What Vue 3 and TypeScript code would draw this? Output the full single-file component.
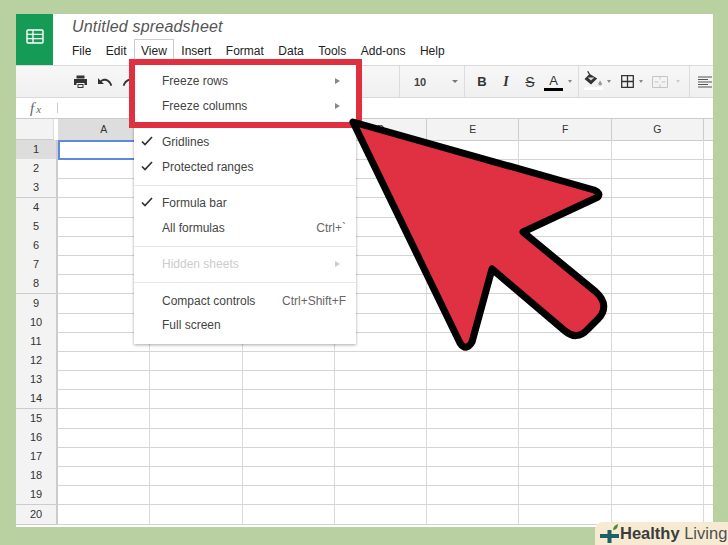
<script setup lang="ts">
const menus = ['File', 'Edit', 'View', 'Insert', 'Format', 'Data', 'Tools', 'Add-ons', 'Help']
const columns = ['A', 'B', 'C', 'D', 'E', 'F', 'G', '']
const rows = Array.from({ length: 20 }, (_, i) => i + 1)

interface Item {
  label?: string
  check?: boolean
  arrow?: boolean
  keys?: string
  disabled?: boolean
  sep?: boolean
}

const items: Item[] = [
  { label: 'Freeze rows', arrow: true },
  { label: 'Freeze columns', arrow: true },
  { sep: true },
  { label: 'Gridlines', check: true },
  { label: 'Protected ranges', check: true },
  { sep: true },
  { label: 'Formula bar', check: true },
  { label: 'All formulas', keys: "Ctrl+`" },
  { sep: true },
  { label: 'Hidden sheets', arrow: true, disabled: true },
  { sep: true },
  { label: 'Compact controls', keys: 'Ctrl+Shift+F' },
  { label: 'Full screen' },
]
</script>

<template>
  <div class="page">
    <div class="sheet">
      <header class="top">
        <div class="logo">
          <svg width="18" height="15" viewBox="0 0 18 15">
            <rect x="1" y="1" width="16" height="13" rx="1" fill="none" stroke="#fff" stroke-width="1.4" />
            <path d="M1 5.3h16M1 9.6h16M7 1v13" stroke="#fff" stroke-width="1.3" />
          </svg>
        </div>
        <div class="titles">
          <div class="doc-title">Untitled spreadsheet</div>
          <nav class="menubar">
            <span v-for="m in menus" :key="m" class="menu-name" :class="{ open: m === 'View' }">{{ m }}</span>
          </nav>
        </div>
      </header>

      <div class="toolbar">
        <div class="tool-group left">
          <svg class="ic" width="15" height="14" viewBox="0 0 15 14">
            <path d="M3.5 0.5h8v3h-8z" fill="#333" />
            <path d="M1 4h13v6h-2.500v-2h-8v2H1z" fill="#333" />
            <path d="M4.500 9h6v4h-6z" fill="#333" />
            <path d="M5.500 10h4v2h-4z" fill="#eee" />
          </svg>
          <svg class="ic" width="16" height="10" viewBox="0 0 16 10">
            <path d="M1 1v6h6L4.600 4.800C7.500 2.800 11.500 3.600 13.600 9l1.600-.6C13 1.500 7.500.2 3.300 3.400z" fill="#333" />
          </svg>
          <svg class="ic" width="16" height="10" viewBox="0 0 16 10">
            <path d="M15 1v6H9l2.400-2.200C8.500 2.800 4.500 3.600 2.400 9L.8 8.400C3 1.500 8.500.2 12.700 3.400z" fill="#333" />
          </svg>
        </div>
        <div class="tool-group font-size">
          <span class="size">10</span>
          <i class="caret" />
        </div>
        <div class="tool-group format">
          <span class="fmt bold">B</span>
          <span class="fmt italic">I</span>
          <span class="fmt strike">S</span>
          <span class="fmt color">A</span>
          <i class="caret small" />
        </div>
        <div class="tool-group fills">
          <svg class="ic bucket" width="20" height="19" viewBox="0 0 20 19">
            <path d="M3 .5l1.200-.5 2 3.200 7 4.300-6.200 6-6.500-5.500L5 3.400z" fill="#333" />
            <path d="M3.800 6.500h6.500l-3.300 3z" fill="#ddd" />
            <path d="M16 9.500c1.500 2 2 2.600 2 3.300a1.800 1.800 0 0 1-3.600 0c0-.7.600-1.300 1.600-3.300z" fill="#999" />
            <rect y="16" width="19" height="3" fill="#fff" />
          </svg>
          <i class="caret small" />
          <svg class="ic borders" width="13" height="13" viewBox="0 0 13 13">
            <path d="M.7.700h11.600v11.600H.7zM6.500.7v11.600M.7 6.500h11.600" fill="none" stroke="#333" stroke-width="1.300" />
          </svg>
          <i class="caret small" />
          <svg class="ic merge" width="16" height="12" viewBox="0 0 16 12">
            <path d="M.5.500h15v11H.5zM8 .5v3M8 8.500v3M2.500 6h4M9.500 6h4" fill="none" stroke="#c4c4c4" stroke-width="1" />
          </svg>
          <i class="caret small faint" />
        </div>
        <div class="tool-group align">
          <svg width="14" height="12" viewBox="0 0 14 12">
            <path d="M0 1h14M0 3.500h10M0 6h14M0 8.500h10M0 11h14" stroke="#555" stroke-width="1.200" />
          </svg>
        </div>
      </div>

      <div class="formula">
        <span class="fx">f<small>x</small></span>
        <i class="fx-line" />
      </div>

      <div class="grid">
        <div class="grid-row head">
          <div class="corner" />
          <div v-for="c in columns" :key="c" class="col-head" :class="{ active: c === 'A' }">{{ c }}</div>
        </div>
        <div v-for="r in rows" :key="r" class="grid-row">
          <div class="row-head" :class="{ active: r === 1 }">{{ r }}</div>
          <div v-for="c in columns" :key="c" class="cell">
            <div v-if="r === 1 && c === 'A'" class="selected" />
          </div>
        </div>
      </div>

      <div class="dropdown">
        <template v-for="(item, i) in items" :key="i">
          <div v-if="item.sep" class="sep" />
          <div v-else class="item" :class="{ disabled: item.disabled }">
            <svg v-if="item.check" class="check" width="12" height="10" viewBox="0 0 12 10">
              <path d="M1 5.500l3 3L11 1" fill="none" stroke="#333" stroke-width="1.700" />
            </svg>
            <span class="label">{{ item.label }}</span>
            <span v-if="item.keys" class="keys">{{ item.keys }}</span>
            <i v-if="item.arrow" class="arrow-right" />
          </div>
        </template>
      </div>
    </div>

    <div class="red-box" />

    <svg class="pointer" width="728" height="545" viewBox="0 0 728 545">
      <path
        d="M353 122 L594 190 Q601 193 598 197 L523 232 L596 292 C606 301 606 311 598 319 L588 329 C580 338 572 337 565 331 L492 269 L472 342 Q466 352 460 343 Z"
        fill="#e03143"
        stroke="#000"
        stroke-width="7"
        stroke-linejoin="round"
      />
    </svg>

    <div class="brand">
      <svg class="brand-icon" width="22" height="20" viewBox="0 0 22 20">
        <path d="M8.500 6h4v4h7.500v4h-7.500v5h-4v-5H1v-4h7.500z" fill="#1f5f66" />
        <path d="M14 6c0-3 2-5 5-6 0 3-1.500 6-5 6z" fill="#4f8a3c" />
      </svg>
      <span class="brand-text"><b>Healthy</b> Living</span>
    </div>
  </div>
</template>

<style>
html,
body {
  margin: 0;
  background: #b9d0a0;
}
</style>

<style scoped>
.page {
  position: relative;
  width: 728px;
  height: 545px;
  box-sizing: border-box;
  padding: 14px 15px 18px 16px;
  overflow: hidden;
  background: #b9d0a0;
  font-family: 'Liberation Sans', Arial, sans-serif;
  color: #333;
}

.sheet {
  position: relative;
  width: 697px;
  height: 513px;
  background: #fff;
  overflow: hidden;
  display: flex;
  flex-direction: column;
}

.top {
  display: flex;
  height: 51px;
  flex: none;
}

.logo {
  width: 37px;
  background: #169b57;
  display: flex;
  align-items: center;
  justify-content: center;
  padding-bottom: 6px;
  box-sizing: border-box;
}

.titles {
  padding-left: 19px;
}

.doc-title {
  font-size: 16px;
  font-style: italic;
  color: #555;
  line-height: 18px;
  margin-top: 4px;
  letter-spacing: 0.2px;
}

.menubar {
  display: flex;
  margin-top: 3px;
  margin-left: -1px;
  font-size: 12px;
  line-height: 23px;
}

.menu-name {
  padding: 0 6.250px;
  border: 1px solid transparent;
  border-bottom: 0;
  color: #222;
  height: 21px;
}

.menu-name:first-child {
  padding-left: 0;
}

.menu-name.open {
  border-color: #ccc;
}

.toolbar {
  height: 33px;
  flex: none;
  box-sizing: border-box;
  border-top: 1px solid #d9d9d9;
  border-bottom: 1px solid #d9d9d9;
  background: linear-gradient(#f7f7f7, #f0f0f0);
  display: flex;
  align-items: center;
}

.tool-group {
  height: 100%;
  display: flex;
  align-items: center;
  box-sizing: border-box;
  border-right: 1px solid #dcdcdc;
}

.left {
  width: 384px;
  padding-left: 57px;
  gap: 9px;
}

.font-size {
  width: 65px;
  padding-left: 14px;
}

.size {
  font-size: 11px;
  font-weight: bold;
  color: #444;
  width: 38px;
}

.caret {
  width: 0;
  height: 0;
  border: 3px solid transparent;
  border-top: 3px solid #777;
  border-bottom: 0;
  display: block;
}

.caret.small {
  border-width: 3px 2.500px 0;
  border-top-color: #888;
}

.caret.faint {
  border-top-color: #ccc;
}

.format {
  width: 114px;
  padding-left: 5px;
}

.fmt {
  width: 24px;
  text-align: center;
  font-size: 13px;
  color: #333;
  line-height: 16px;
}

.bold {
  font-weight: bold;
}

.italic {
  font-family: 'Liberation Serif', serif;
  font-style: italic;
  font-weight: bold;
  font-size: 14px;
}

.strike {
  font-size: 14px;
  text-decoration: line-through;
}

.color {
  border-bottom: 3px solid #000;
  width: 19px;
  margin-left: 2px;
  margin-right: 5px;
  line-height: 14px;
  padding-top: 2px;
}

.fills {
  width: 111px;
  padding-left: 5px;
}

.bucket {
  margin: -2px 3px 0 0;
}

.borders {
  margin: 0 5px 0 10px;
}

.merge {
  margin: 0 8px 0 9px;
}

.align {
  border-right: 0;
  padding-left: 8px;
}

.formula {
  flex: none;
  display: flex;
  align-items: center;
  border-bottom: 1px solid #ccc;
  box-sizing: border-box;
  height: 21px;
}

.fx {
  font-family: 'Liberation Serif', serif;
  font-style: italic;
  font-size: 15px;
  color: #666;
  margin-left: 14px;
  width: 27px;
}

.fx small {
  font-size: 11px;
  margin-left: 2px;
}

.fx-line {
  width: 1px;
  height: 10px;
  background: #ccc;
}

.grid {
  flex: 1;
}

.grid-row {
  display: grid;
  grid-template-columns: 42px repeat(7, 92.300px) 14px;
  height: 19.200px;
  box-sizing: border-box;
}

.grid-row.head {
  height: 21px;
}

.corner {
  background: #f3f3f3;
  margin-right: 4px;
  border-right: 1px solid #ddd;
  border-bottom: 2px solid #ccc;
}

.col-head {
  background: #f3f3f3;
  border-right: 1px solid #ccc;
  border-bottom: 1px solid #ccc;
  text-align: center;
  font-size: 10.500px;
  line-height: 21px;
  color: #333;
}

.col-head.active {
  background: #ddd;
}

.row-head {
  background: #f3f3f3;
  border-right: 2px solid #ccc;
  border-bottom: 1px solid #ccc;
  text-align: center;
  font-size: 11px;
  line-height: 19px;
  color: #333;
}

.row-head.active {
  background: #ddd;
}

.cell {
  position: relative;
  border-right: 1px solid #d9d9d9;
  border-bottom: 1px solid #d4d4d4;
}

.selected {
  position: absolute;
  inset: 0 -1px -1px 0;
  border: 2px solid #5b8ae0;
  border-right: 0;
}

.dropdown {
  position: absolute;
  left: 118px;
  top: 51px;
  width: 222px;
  height: 279px;
  box-sizing: border-box;
  background: #fff;
  box-shadow: 0 1px 3px rgba(0, 0, 0, 0.35);
  padding-top: 4px;
  font-size: 12px;
}

.item {
  position: relative;
  height: 24.500px;
  line-height: 24.500px;
  padding-left: 28px;
  display: flex;
  color: #444;
}

.item.disabled {
  color: #ccc;
}

.label {
  flex: 1;
}

.check {
  position: absolute;
  left: 7px;
  top: 6px;
}

.keys {
  color: #666;
  padding-right: 10px;
}

.arrow-right {
  width: 0;
  height: 0;
  margin: 9px 16px 0 0;
  border-left: 5px solid #888;
  border-top: 3px solid transparent;
  border-bottom: 3px solid transparent;
}

.disabled .arrow-right {
  border-left-color: #ccc;
}

.sep {
  height: 1px;
  margin: 5.500px 0;
  background: #e8e8e8;
}

.red-box {
  position: absolute;
  left: 129px;
  top: 59px;
  width: 233px;
  height: 69px;
  box-sizing: border-box;
  border: 6.500px solid #e0303f;
}

.pointer {
  position: absolute;
  left: 0;
  top: 0;
}

.brand {
  position: absolute;
  right: 0;
  bottom: 0;
  width: 133px;
  height: 23px;
  box-sizing: border-box;
  background: #f6ebd2;
  border-top-left-radius: 8px;
  display: flex;
  align-items: center;
  padding-left: 4px;
}

.brand-icon {
  flex: none;
}

.brand-text {
  font-size: 16.500px;
  color: #4f4f4f;
  white-space: nowrap;
  margin-left: -1px;
}

.brand-text b {
  color: #3c3c3c;
}
</style>
